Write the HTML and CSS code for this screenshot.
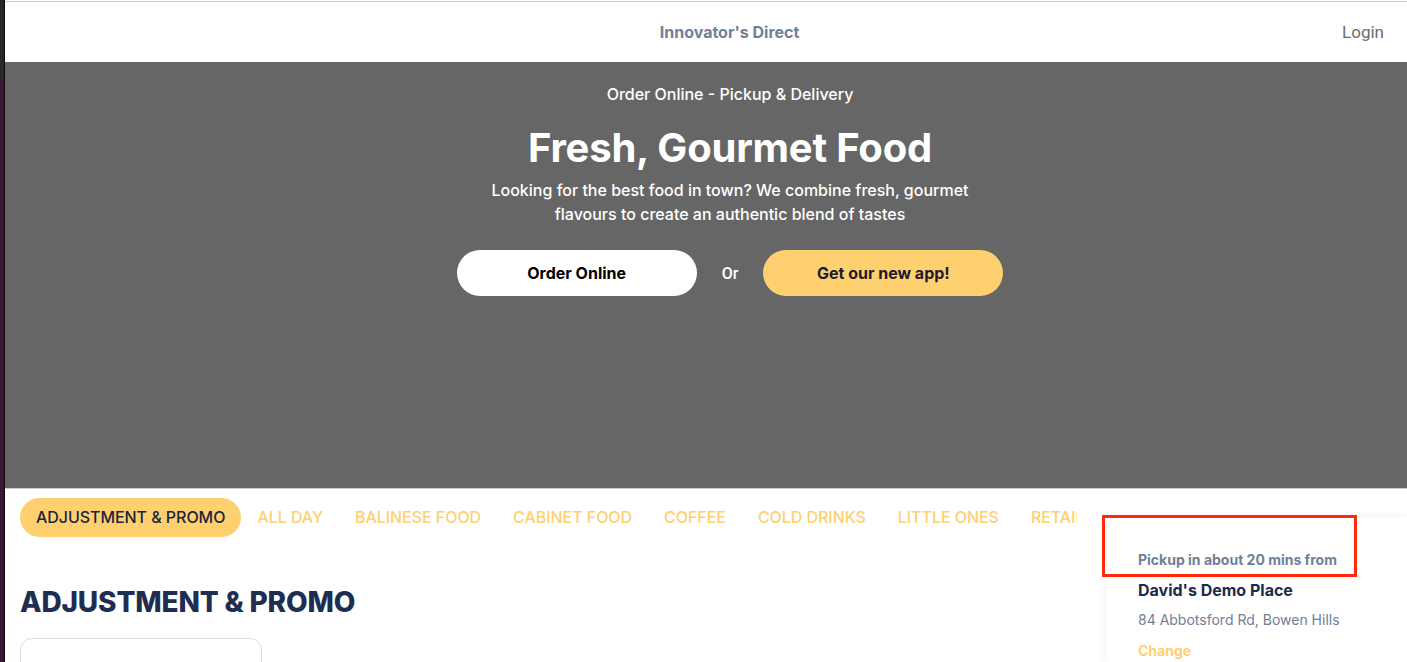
FILE: index.html
```html
<!DOCTYPE html>
<html>
<head>
<meta charset="utf-8">
<link rel="stylesheet" href="styles.css">
</head>
<body>
<div class="edge"></div>
<div class="page">
  <div class="topline"></div>
  <header class="header">
    <div class="brand">Innovator's Direct</div>
    <a class="login">Login</a>
  </header>
  <section class="hero">
    <div class="hero-inner">
      <div class="kicker">Order Online - Pickup &amp; Delivery</div>
      <h1 class="title">Fresh, Gourmet Food</h1>
      <p class="lead">Looking for the best food in town? We combine fresh, gourmet flavours to create an authentic blend of tastes</p>
      <div class="actions">
        <a class="btn btn-white">Order Online</a>
        <span class="or">Or</span>
        <a class="btn btn-yellow">Get our new app!</a>
      </div>
    </div>
  </section>
  <div class="main">
    <div class="content">
      <nav class="tabs">
        <span class="tab active">ADJUSTMENT &amp; PROMO</span>
        <span class="tab">ALL DAY</span>
        <span class="tab">BALINESE FOOD</span>
        <span class="tab">CABINET FOOD</span>
        <span class="tab">COFFEE</span>
        <span class="tab">COLD DRINKS</span>
        <span class="tab">LITTLE ONES</span>
        <span class="tab">RETAIL</span>
      </nav>
      <h2 class="section-title">ADJUSTMENT &amp; PROMO</h2>
      <div class="item-card"></div>
    </div>
    <aside class="sidebar">
      <div class="pickup-card">
        <div class="pickup-label">Pickup in about 20 mins from</div>
        <div class="store-name">David's Demo Place</div>
        <div class="store-addr">84 Abbotsford Rd, Bowen Hills</div>
        <a class="change">Change</a>
      </div>
      <div class="annotation"></div>
    </aside>
  </div>
</div>
</body>
</html>
```
FILE: styles.css
```css
html, body {
  margin: 0;
  padding: 0;
  height: 100%;
  overflow: hidden;
}
body {
  display: flex;
  background: #fff;
  font-family: Inter, "Noto Sans", sans-serif;
}
.edge {
  width: 4px;
  flex: none;
  border-right: 1px solid #0a0a0a;
  background: linear-gradient(#2b2621 0 82px, #3a1538 82px);
}
.page {
  flex: 1;
  min-width: 0;
  display: flex;
  flex-direction: column;
}
.topline {
  height: 1px;
  margin-top: 1px;
  background: #e2c6c4;
}
.header {
  height: 60px;
  display: flex;
  align-items: center;
  justify-content: space-between;
  padding: 0 23px 0 48px;
}
.brand {
  flex: 1;
  text-align: center;
  font-size: 16px;
  font-weight: 700;
  color: #718096;
  padding-left: 64px;
}
.login {
  font-size: 17px;
  color: #6b6b6b;
  font-family: Roboto, Inter, sans-serif;
}
.hero {
  height: 427px;
  background: #666666;
  border-bottom: 1px solid #cfcfcf;
  padding-left: 48px;
  box-sizing: border-box;
  display: flex;
  justify-content: center;
  color: #fff;
}
.hero-inner {
  display: flex;
  flex-direction: column;
  align-items: center;
  text-align: center;
  padding-top: 21px;
}
.kicker {
  font-size: 16px;
  font-weight: 500;
  line-height: 22px;
}
.title {
  margin: 19px 0 0;
  font-size: 40px;
  line-height: 48px;
  font-weight: 700;
  letter-spacing: -0.2px;
}
.lead {
  margin: 6px 0 0;
  width: 500px;
  font-size: 16px;
  line-height: 24px;
  font-weight: 500;
}
.actions {
  margin-top: 24px;
  display: flex;
  align-items: center;
  gap: 25px;
}
.btn {
  width: 240px;
  height: 46px;
  border-radius: 23px;
  display: flex;
  align-items: center;
  justify-content: center;
  font-size: 16px;
  font-weight: 700;
}
.btn-white {
  background: #fff;
  color: #000;
}
.btn-yellow {
  background: #fed070;
  color: #1b1b2b;
}
.or {
  font-size: 16px;
  font-weight: 500;
  font-family: Roboto, Inter, sans-serif;
}
.main {
  flex: 1;
  display: flex;
  min-height: 0;
}
.content {
  flex: 1;
  min-width: 0;
  padding: 9px 0 0 15px;
  margin-right: 30px;
  overflow: hidden;
}
.tabs {
  display: flex;
  white-space: nowrap;
  overflow: hidden;
}
.tab {
  flex: none;
  padding: 8px 16px;
  line-height: 23px;
  font-size: 16px;
  font-weight: 500;
  letter-spacing: -0.05px;
  color: #fed070;
  border-radius: 20px;
}
.tab.active {
  background: #fed070;
  color: #1c2438;
}
.section-title {
  margin: 48px 0 0;
  font-size: 28px;
  line-height: 34px;
  font-weight: 800;
  letter-spacing: -0.15px;
  color: #1e2d50;
}
.item-card {
  margin-top: 19px;
  width: 240px;
  height: 80px;
  border: 1px solid #dcdcdc;
  border-radius: 12px;
}
.sidebar {
  width: 300px;
  flex: none;
  position: relative;
  padding-top: 28px;
}
.pickup-card {
  height: 100%;
  box-sizing: border-box;
  padding: 33px 0 0 31px;
  border-top-left-radius: 18px;
  box-shadow: 0 0 8px rgba(0, 0, 0, 0.07);
}
.pickup-label {
  font-size: 14px;
  line-height: 20px;
  font-weight: 700;
  color: #718096;
}
.store-name {
  margin-top: 8px;
  font-size: 16px;
  line-height: 24px;
  font-weight: 700;
  color: #1e2a4a;
}
.store-addr {
  margin-top: 8px;
  font-size: 14px;
  line-height: 20px;
  color: #718096;
}
.change {
  display: block;
  margin-top: 11px;
  font-size: 14px;
  line-height: 20px;
  font-weight: 700;
  color: #fed070;
}
.annotation {
  position: absolute;
  left: -5px;
  top: 26px;
  width: 255px;
  height: 62px;
  box-sizing: border-box;
  border: 3px solid #ff2a0a;
}
```
